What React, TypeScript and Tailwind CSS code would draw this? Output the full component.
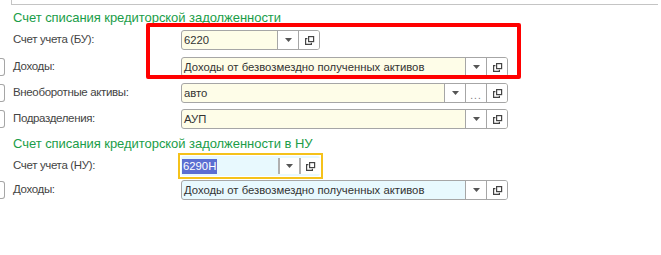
import React from "react";

type Btn = "drop" | "dots" | "open";

function DropIcon() {
  return (
    <svg width="7" height="4" viewBox="0 0 7 4">
      <path d="M0 0H7L3.5 4Z" fill="#555" />
    </svg>
  );
}

function OpenIcon() {
  return (
    <svg width="11" height="11" viewBox="0 0 11 11" fill="none" stroke="#444" strokeWidth="1.2">
      <rect x="4.6" y="1.6" width="5" height="5" />
      <path d="M3.4 3.6H1.6V9.4H7.4V7.8" />
    </svg>
  );
}

function Field({
  text, width, btns, bg = "bg-[#fefde8]", selected = false, focused = false,
}: { text: string; width: number; btns: Btn[]; bg?: string; selected?: boolean; focused?: boolean }) {
  return (
    <div
      className={`flex h-[20px] rounded-[3px] overflow-hidden ${focused ? "" : "border border-[#a6a6a6]"} ${bg}`}
      style={{ width }}
    >
      <div className="flex-1 flex items-center pl-[1px] text-[11.3px] text-[#333]">
        {selected ? <span className="bg-[#5b6ed2] text-white px-[1px] leading-[15px]">{text}</span> : <span className="pl-[1px]">{text}</span>}
      </div>
      {btns.map((b, i) => (
        <div
          key={i}
          className={`w-[21px] flex items-center justify-center ${focused ? "bg-white border-l-2 border-[#b0b0b0] my-[2px]" : "bg-white border-l border-[#a6a6a6]"}`}
        >
          {b === "drop" && <DropIcon />}
          {b === "open" && <OpenIcon />}
          {b === "dots" && <span className="text-[10px] text-[#777] tracking-[1px] mt-[4px]">...</span>}
        </div>
      ))}
    </div>
  );
}

function Row({
  label, box = false, children, className = "",
}: { label: string; box?: boolean; children: React.ReactNode; className?: string }) {
  return (
    <div className={`flex items-center ${className}`}>
      <div className="w-[13px] shrink-0">
        {box && <div className="w-[5px] h-[18px] border border-l-0 border-[#a6a6a6] rounded-r-[3px]" />}
      </div>
      <div className="w-[168px] shrink-0 text-[11.5px] tracking-[-0.35px] text-[#444]">{label}</div>
      {children}
    </div>
  );
}

export default function App() {
  return (
    <div
      className="relative w-[661px] h-[255px] bg-white overflow-hidden"
      style={{ fontFamily: '"Liberation Sans", Arial, sans-serif' }}
    >
      <div className="ml-[11px] mr-[3px] h-[5px] border-l border-b border-[#c4c4c4]" />

      <div className="pl-[13px] mt-[6px] text-[13px] leading-[14px] tracking-[-0.05px] text-[#1a9d48]">
        Счет списания кредиторской задолженности
      </div>

      <Row label="Счет учета (БУ):" className="mt-[5px]">
        <Field text="6220" width={139} btns={["drop", "open"]} />
      </Row>
      <Row label="Доходы:" box className="mt-[7px]">
        <Field text="Доходы от безвозмездно полученных активов" width={327} btns={["drop", "open"]} />
      </Row>
      <Row label="Внеоборотные активы:" box className="mt-[6px]">
        <Field text="авто" width={327} btns={["drop", "dots", "open"]} />
      </Row>
      <Row label="Подразделения:" box className="mt-[6px]">
        <Field text="АУП" width={327} btns={["drop", "open"]} />
      </Row>

      <div className="pl-[13px] mt-[8px] text-[13px] leading-[14px] tracking-[-0.05px] text-[#1a9d48]">
        Счет списания кредиторской задолженности в НУ
      </div>

      <Row label="Счет учета (НУ):" className="mt-[2px]">
        <div className="-ml-[3px] border-2 border-[#f5c21b] p-[1px]">
          <Field text="6290Н" width={139} btns={["drop", "open"]} bg="bg-[#e8f9fe]" selected focused />
        </div>
      </Row>
      <Row label="Доходы:" box className="mt-[1px]">
        <Field text="Доходы от безвозмездно полученных активов" width={327} btns={["drop", "open"]} bg="bg-[#e8f9fe]" />
      </Row>

      {/* highlight frame over the first block */}
      <div className="absolute left-[146px] top-[23px] w-[375px] h-[56px] border-4 border-[#ff0000] rounded-[2px]" />
    </div>
  );
}
